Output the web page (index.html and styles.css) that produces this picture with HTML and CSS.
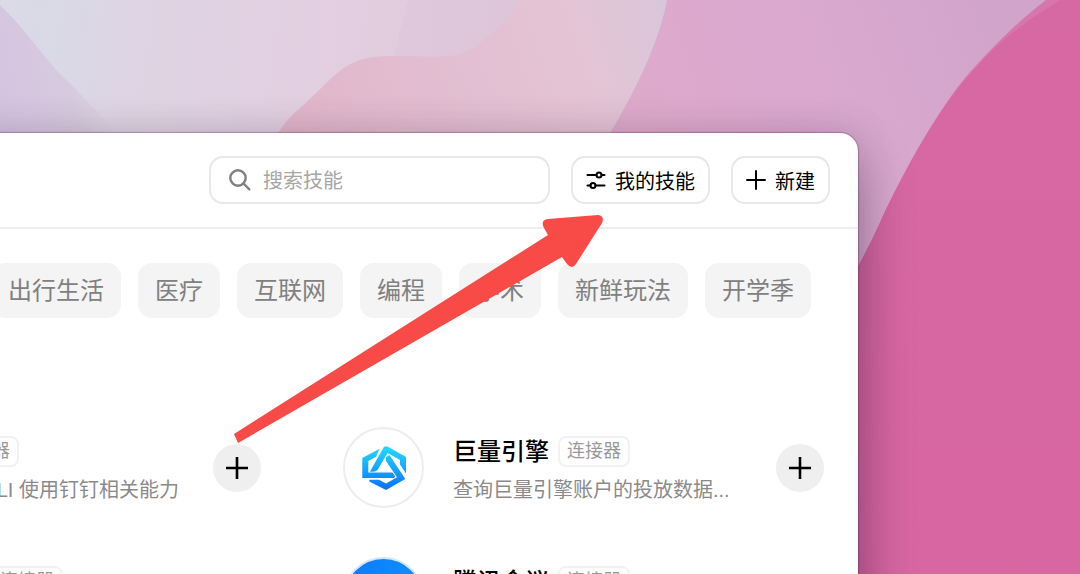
FILE: index.html
```html
<!DOCTYPE html>
<html lang="zh-CN">
<head>
<meta charset="utf-8">
<title>技能</title>
<link rel="stylesheet" href="styles.css">
</head>
<body>
<div class="desktop">
  <svg class="wallpaper" viewBox="0 0 1080 574" preserveAspectRatio="xMinYMin slice" aria-hidden="true">
    <defs>
      <linearGradient id="sky" gradientUnits="userSpaceOnUse" x1="0" y1="0" x2="520" y2="60">
        <stop offset="0" stop-color="#d9dbe7"/>
        <stop offset=".15" stop-color="#dad8e5"/>
        <stop offset=".28" stop-color="#dfd4e3"/>
        <stop offset=".6" stop-color="#e2cfe1"/>
        <stop offset="1" stop-color="#e1c8db"/>
      </linearGradient>
      <linearGradient id="leftfade" gradientUnits="userSpaceOnUse" x1="0" y1="100" x2="115" y2="75">
        <stop offset="0" stop-color="#d5c4e0"/>
        <stop offset=".6" stop-color="#d7cade"/>
        <stop offset="1" stop-color="#dcd0e1" stop-opacity="0"/>
      </linearGradient>
      <linearGradient id="rose" gradientUnits="userSpaceOnUse" x1="300" y1="120" x2="660" y2="0">
        <stop offset="0" stop-color="#e2b6ca"/>
        <stop offset=".4" stop-color="#e2bed1"/>
        <stop offset=".75" stop-color="#e4c4d4"/>
        <stop offset="1" stop-color="#dac6da"/>
      </linearGradient>
      <linearGradient id="orchid" gradientUnits="userSpaceOnUse" x1="640" y1="130" x2="1000" y2="0">
        <stop offset="0" stop-color="#deaacb"/>
        <stop offset=".45" stop-color="#dba9d0"/>
        <stop offset="1" stop-color="#d1a4cc"/>
      </linearGradient>
      <linearGradient id="pink" x1="0" y1="0" x2="0" y2="1">
        <stop offset="0" stop-color="#d668a4"/>
        <stop offset="1" stop-color="#d766a1"/>
      </linearGradient>
    </defs>
    <rect width="1080" height="574" fill="url(#sky)"/>
    <path d="M0 5C24 28 40 52 58 72C85 98 105 119 130 150H0Z" fill="url(#leftfade)"/>
    <path d="M409 0C402 20 397 40 394 60H540V0Z" fill="#dcc4d9" opacity=".6"/>
    <path d="M266 150C280 130 288 117 298 110C318 92 330 78 340 71C355 59 369 56 395 56C425 56 451 59 465 52C480 44 500 30 518 0H680V150Z" fill="url(#rose)"/>
    <path d="M667 0C660 38 639 87 600 150V574H1080V0Z" fill="url(#orchid)"/>
    <path d="M1046 0C1015 24 997 43 970 72C940 106 906 167 882 218C872 241 862 259 840 300V574H1080V0Z" fill="#d776ae"/>
    <path d="M1060 0C1021 25 1001 39 973 71C940 106 906 167 882 218C872 241 862 259 840 300V574H1080V0Z" fill="url(#pink)"/>
  </svg>

  <main class="window">
    <header class="toolbar">
      <label class="search">
        <svg class="search-icon" viewBox="0 0 22 22" aria-hidden="true"><circle cx="9" cy="9" r="7.7"/><path d="M14.500 14.500L20.300 20.300"/></svg>
        <input type="search" placeholder="搜索技能" aria-label="搜索技能">
      </label>
      <button class="button" type="button">
        <svg class="sliders-icon" viewBox="0 0 20 20" aria-hidden="true"><path d="M1.500 5H10.500M15.500 5H18.500M1.500 15.500H4.500M9.500 15.500H18.500"/><circle cx="13" cy="5" r="2.500"/><circle cx="7" cy="15.500" r="2.500"/></svg>
        我的技能
      </button>
      <button class="button" type="button">
        <svg class="new-icon" viewBox="0 0 20 20" aria-hidden="true"><path d="M10 1V19M1 10H19"/></svg>
        新建
      </button>
    </header>

    <nav class="chips" aria-label="分类">
      <button class="chip" type="button">出行生活</button>
      <button class="chip" type="button">医疗</button>
      <button class="chip" type="button">互联网</button>
      <button class="chip" type="button">编程</button>
      <button class="chip" type="button">学术</button>
      <button class="chip" type="button">新鲜玩法</button>
      <button class="chip" type="button">开学季</button>
    </nav>

    <section class="cards">
      <article class="card">
        <div class="avatar"></div>
        <div class="info">
          <div class="heading"><h2>钉钉</h2><span class="tag">连接器</span></div>
          <p>通过 Ding CLI 使用钉钉相关能力</p>
        </div>
        <button class="add" type="button" aria-label="添加钉钉"><svg viewBox="0 0 24 24" aria-hidden="true"><path d="M12 1V23M1 12H23"/></svg></button>
      </article>
      <article class="card">
        <div class="avatar">
          <svg class="engine-logo" viewBox="0 0 44 44" aria-hidden="true">
            <defs><linearGradient id="engine" x1="0" y1="0" x2="0" y2="1" gradientUnits="userSpaceOnUse" gradientTransform="scale(44)"><stop offset="0" stop-color="#25dcff"/><stop offset=".5" stop-color="#14a8fd"/><stop offset="1" stop-color="#0c70fc"/></linearGradient></defs>
            <g fill="url(#engine)">
              <path d="M17.500 2.800L.3 12V32H32L33.300 30.500L30.500 26.400H6.300V15L14 10.800Z"/>
              <path d="M8 25.500L21.500 1.500Q23.500 -.8 26 .8L44 11V27.500L38 18.500V14L25.500 7L15.500 24Q13.500 26.500 8 25.500Z"/>
              <path d="M24 11L27.500 9L43.300 33L24 44L7.300 35.500V33.800H17L24 37.600L35 31.300L24 15Z"/>
            </g>
          </svg>
        </div>
        <div class="info">
          <div class="heading"><h2>巨量引擎</h2><span class="tag">连接器</span></div>
          <p>查询巨量引擎账户的投放数据...</p>
        </div>
        <button class="add" type="button" aria-label="添加巨量引擎"><svg viewBox="0 0 24 24" aria-hidden="true"><path d="M12 1V23M1 12H23"/></svg></button>
      </article>
      <article class="card">
        <div class="avatar"></div>
        <div class="info">
          <div class="heading"><h2>QQ 邮箱</h2><span class="tag">连接器</span></div>
          <p>收发和管理邮件</p>
        </div>
        <button class="add" type="button" aria-label="添加 QQ 邮箱"><svg viewBox="0 0 24 24" aria-hidden="true"><path d="M12 1V23M1 12H23"/></svg></button>
      </article>
      <article class="card">
        <div class="avatar avatar-blue"></div>
        <div class="info">
          <div class="heading"><h2>腾讯会议</h2><span class="tag">连接器</span></div>
          <p>预约和管理会议</p>
        </div>
        <button class="add" type="button" aria-label="添加腾讯会议"><svg viewBox="0 0 24 24" aria-hidden="true"><path d="M12 1V23M1 12H23"/></svg></button>
      </article>
    </section>
  </main>

  <svg class="arrow" viewBox="0 0 372 228" aria-hidden="true">
    <path d="M1 219L315 20L311 13Q307 5 315 4L365 0Q372 1 369 8L343 49Q339 55 334 49L329 42L5 228Z"/>
  </svg>
</div>
</body>
</html>
```
FILE: styles.css
```css
* { box-sizing: border-box; }

body {
  margin: 0;
  font-family: "Liberation Sans", "Noto Sans CJK SC", sans-serif;
  color: #000;
}

button, input { font: inherit; }

.desktop {
  position: relative;
  height: 100vh;
  overflow: hidden;
  padding: 133px 222px 0 0;
  background: #d766a1;
}

.wallpaper {
  position: absolute;
  inset: 0;
  width: 100%;
  height: 100%;
}

/* The window runs past the left and bottom edges of the screen. */
.window {
  position: relative;
  margin-left: -260px;
  min-height: 900px;
  background: #fff;
  border-radius: 18px;
  box-shadow: 0 0 1px 1px rgba(80, 30, 70, .3), 0 0 40px rgba(60, 40, 60, .16), 0 28px 54px rgba(30, 10, 40, .36);
}

.toolbar {
  display: flex;
  justify-content: flex-end;
  gap: 21px;
  padding: 23px 28px;
  border-bottom: 2px solid #eee;
}

.search, .button {
  display: flex;
  align-items: center;
  height: 48px;
  border: 2px solid #e8e8e8;
  border-radius: 14px;
  background: #fff;
  font-size: 20px;
}

.search {
  width: 341px;
  gap: 12px;
  padding: 0 18px;
}

.search input {
  flex: 1;
  min-width: 0;
  padding: 2px 0 0;
  border: 0;
  outline: 0;
  background: none;
}

.search input::placeholder { color: #a6a6a6; opacity: 1; }

.button {
  padding: 0 13px;
  gap: 9px;
  color: #000;
  white-space: nowrap;
}

.search-icon, .sliders-icon, .new-icon, .add svg {
  flex: none;
  fill: none;
  stroke: #000;
  stroke-linecap: round;
}

.search-icon { width: 22px; height: 22px; stroke: #808080; stroke-width: 2.4; }
.sliders-icon { width: 20px; height: 20px; stroke-width: 2; }
.new-icon { width: 20px; height: 20px; stroke-width: 2; }

.chips {
  display: flex;
  justify-content: flex-end;
  gap: 17px;
  padding: 34px 47px 0 0;
}

.chip {
  flex: none;
  height: 55px;
  padding: 0 17px 4px;
  border: 0;
  border-radius: 14px;
  background: #f4f4f4;
  color: #808080;
  font-size: 24px;
}

.cards {
  display: grid;
  grid-template-columns: 1fr 1fr;
  gap: 49px 82px;
  padding: 109px 34px 0 40px;
}

.card {
  display: flex;
  align-items: center;
  gap: 29px;
}

.avatar {
  display: grid;
  place-items: center;
  flex: none;
  width: 81px;
  height: 81px;
  border: 2px solid #ededed;
  border-radius: 50%;
}

.avatar-blue {
  border-color: #d5e6fb;
  background: linear-gradient(100deg, #0a7bff, #1192ff);
}

.engine-logo { width: 44px; height: 44px; }

.info {
  flex: 1;
  min-width: 0;
  padding-top: 5px;
}

.heading {
  display: flex;
  align-items: center;
  gap: 9px;
}

.heading h2 {
  margin: 0;
  font-size: 24px;
  line-height: 32px;
  font-weight: 500;
}

.tag {
  padding: 0 7px;
  border: 2px solid #f2f2f2;
  border-radius: 8px;
  color: #999;
  font-size: 18px;
  line-height: 27px;
}

.info p {
  margin: 7px 0 0;
  color: #8a8a8a;
  font-size: 20px;
  line-height: 30px;
  white-space: nowrap;
}

.add {
  display: grid;
  place-items: center;
  flex: none;
  width: 48px;
  height: 48px;
  padding: 0;
  border: 0;
  border-radius: 50%;
  background: #efefef;
}

.add svg { width: 24px; height: 24px; stroke-width: 2.6; stroke-linecap: butt; }

.arrow {
  position: absolute;
  left: 233px;
  top: 215px;
  width: 372px;
  height: 228px;
  fill: #f84a46;
}
```
